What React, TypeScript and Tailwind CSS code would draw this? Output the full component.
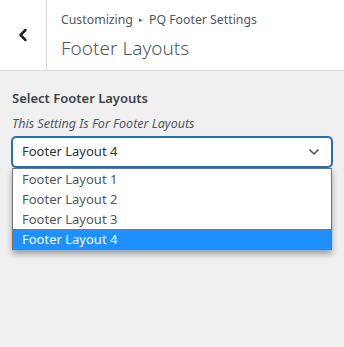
import { ChevronLeft, ChevronDown } from 'lucide-react';

const options = ['Footer Layout 1', 'Footer Layout 2', 'Footer Layout 3', 'Footer Layout 4'];

const App = () => {
  const selected = 'Footer Layout 4';
  return (
    <div className="w-[344px] h-[347px] bg-[#f0f0f1] font-['Noto_Sans',sans-serif] overflow-hidden">
      {/* Header */}
      <div className="flex h-[71px] bg-white border-b border-[#dcdcde]">
        <button className="w-[47px] flex items-center justify-center border-r border-[#dcdcde] text-[#1d2327]">
          <ChevronLeft className="w-5 h-5" strokeWidth={3} />
        </button>
        <div className="pl-[14px] pt-[10px]">
          <div className="flex items-center text-[12.3px] leading-[20px] text-[#50575e]">
            Customizing
            <span className="mx-[6px] text-[7px]">▸</span>
            PQ Footer Settings
          </div>
          <div className="text-[19px] leading-[28px] mt-[4px] text-[#50575e] font-light">Footer Layouts</div>
        </div>
      </div>

      {/* Control */}
      <div className="px-[12px] pt-[17px]">
        <div className="text-[13px] leading-[20px] font-semibold text-[#3c434a]">Select Footer Layouts</div>
        <div className="mt-[7px] text-[12.5px] leading-[18px] italic text-[#50575e]">This Setting Is For Footer Layouts</div>
        <div className="relative mt-[4px]">
          <div className="flex items-center justify-between h-[30px] pl-[9px] pr-[9px] bg-white border border-[#2271b1] rounded-[4px] shadow-[0_0_0_1px_#2271b1] text-[13px] text-[#2c3338]">
            <span>{selected}</span>
            <ChevronDown className="w-4 h-4 text-[#50575e]" strokeWidth={2.5} />
          </div>
          <div className="absolute left-0 right-0 top-[31px] bg-white border border-[#767676] shadow-[0_4px_6px_rgba(0,0,0,0.35)]">
            {options.map((o) => (
              <div
                key={o}
                className={
                  o === selected
                    ? 'h-[20px] pl-[9px] text-[13px] leading-[20px] bg-[#1e90ff] text-white'
                    : 'h-[20px] pl-[9px] text-[13px] leading-[20px] text-[#50575e]'
                }
              >
                {o}
              </div>
            ))}
          </div>
        </div>
      </div>
    </div>
  );
};

export default App;
